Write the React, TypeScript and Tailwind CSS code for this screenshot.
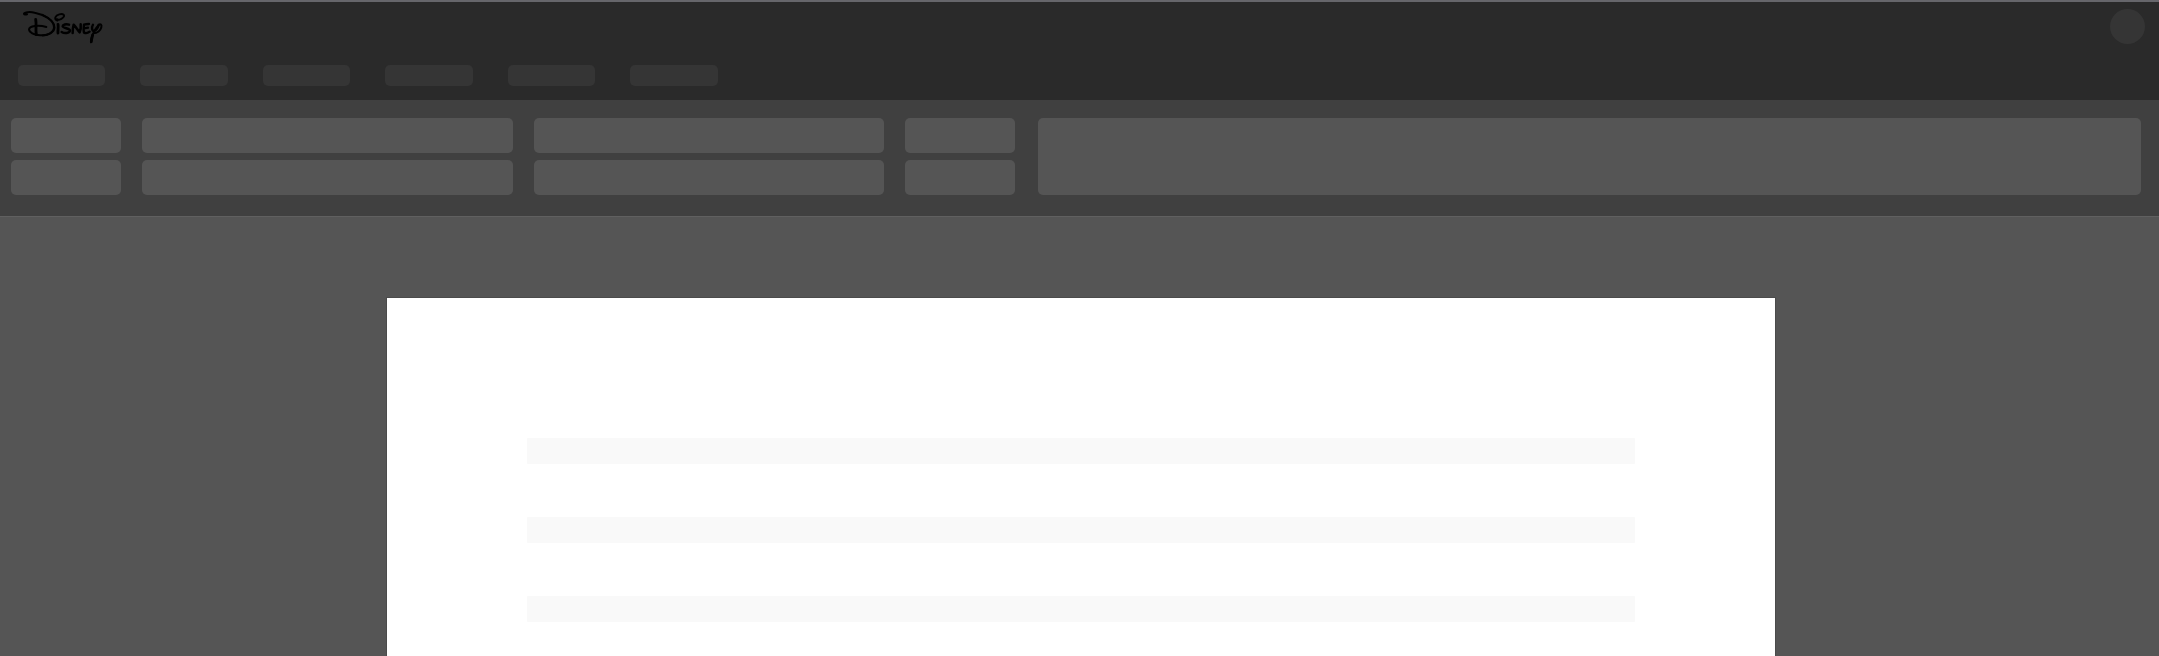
const TABS = [0, 1, 2, 3, 4, 5];
const LINES = [0, 1, 2];

function Logo() {
  return (
    <svg
      role="img"
      aria-label="Disney"
      className="h-[36px] w-[84px]"
      viewBox="66 26 252 108"
      fill="none"
      stroke="#000"
      strokeLinecap="round"
      strokeLinejoin="round"
    >
      <path
        strokeWidth="6"
        d="M81 42 C76 43 72 43 72 40 C74 35 90 34 104 37 C132 42 162 60 162 81 C162 98 140 106 120 105 C102 104 87 96 87 87 C88 76 116 73 139 80"
      />
      <path strokeWidth="5" d="M127 43 C148 52 164 67 164 82 C163 96 146 104 128 106" />
      <path strokeWidth="8.5" d="M107 57 C110 70 106 90 109 103" />
      <path strokeWidth="5.5" d="M172 61 C160 57 166 45 178 42 C190 39 197 45 189 52 C183 58 174 60 171 56" />
      <path strokeWidth="8.5" d="M174 72 C176 80 173 91 174 98" />
      <path strokeWidth="7.5" d="M207 73 C198 70 188 73 188 78 C189 84 211 84 210 91 C209 99 193 100 185 95" />
      <path strokeWidth="7.5" d="M218 98 C218 90 219 80 221 73 C228 80 233 90 239 96 C242 89 243 80 242 72" />
      <path strokeWidth="7" d="M267 71 C260 71 255 72 252 73 C251 82 250 90 252 97 C257 99 264 98 269 94 M252 84 L264 82" />
      <path strokeWidth="7" d="M279 73 C274 82 276 92 282 92 C289 91 295 80 296 74" />
      <path strokeWidth="6" d="M273 126 C272 112 284 86 296 74 C301 69 306 73 304 81 C302 90 292 99 280 99" />
      <path strokeWidth="8.5" d="M274 124 C274 117 276 111 278 104" />
    </svg>
  );
}

function FieldPair({ className }: { className: string }) {
  return (
    <div className={`flex shrink-0 flex-col gap-[7px] ${className}`}>
      <div className="h-[35px] rounded-[5px] bg-[#555555]" />
      <div className="h-[35px] rounded-[5px] bg-[#555555]" />
    </div>
  );
}

export default function App() {
  return (
    <div className="flex h-[656px] w-full flex-col overflow-hidden bg-[#555555]">
      <header className="flex h-[100px] shrink-0 flex-col border-t-2 border-[#66666b] bg-[#2a2a2a]">
        <div className="flex h-[63px] items-start justify-between pt-[7px] pr-[14px] pl-[22px]">
          <Logo />
          <div className="size-[35px] rounded-full bg-[#353535]" />
        </div>
        <nav className="flex gap-[35px] pl-[17.5px]">
          {TABS.map((tab) => (
            <div key={tab} className="h-[21px] w-[87.5px] rounded-[5px] bg-[#353535]" />
          ))}
        </nav>
      </header>
      <div className="flex h-[117px] shrink-0 border-b border-[#606060] bg-[#404040] pt-[18px] pr-[18px] pl-[11px]">
        <FieldPair className="w-[110px]" />
        <FieldPair className="ml-[21px] w-[371px]" />
        <FieldPair className="ml-[21px] w-[350px]" />
        <FieldPair className="ml-[21px] w-[110px]" />
        <div className="ml-[23px] h-[77px] flex-1 rounded-[5px] bg-[#555555]" />
      </div>
      <main className="flex flex-1 pt-[81px] pl-[387px]">
        <div className="flex w-[1388px] flex-col gap-[53px] bg-white px-[140px] pt-[140px] shadow-[0_0_0_1px_#4b4b4b]">
          {LINES.map((line) => (
            <div key={line} className="h-[26px] shrink-0 rounded-[1px] bg-[#f9f9f9]" />
          ))}
        </div>
      </main>
    </div>
  );
}
